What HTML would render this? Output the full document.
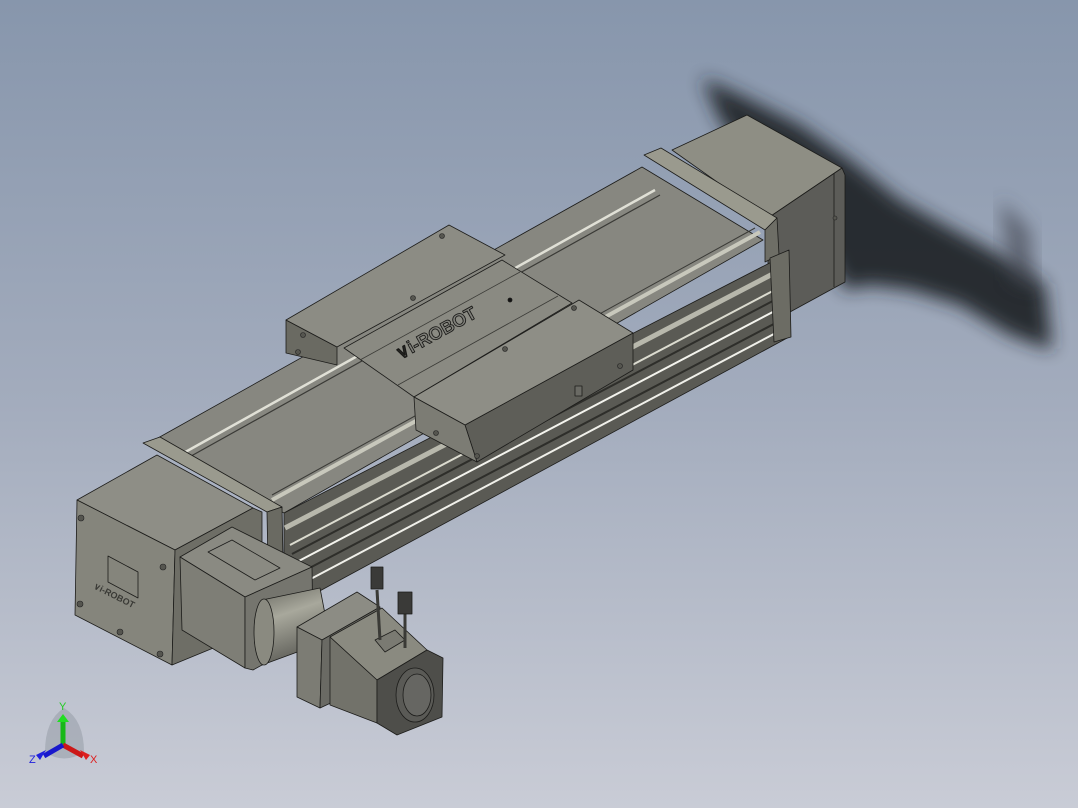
<!DOCTYPE html>
<html><head><meta charset="utf-8"><style>
html,body{margin:0;padding:0;width:1078px;height:808px;overflow:hidden}
svg{display:block}
</style></head><body>
<svg width="1078" height="808" viewBox="0 0 1078 808" xmlns="http://www.w3.org/2000/svg">
<defs>
<linearGradient id="bg" x1="0" y1="0" x2="0" y2="1">
<stop offset="0" stop-color="#8796ac"/><stop offset="0.5" stop-color="#a3acbd"/><stop offset="1" stop-color="#c9ccd6"/>
</linearGradient>
<filter id="blur" x="-20%" y="-20%" width="140%" height="140%"><feGaussianBlur stdDeviation="9"/></filter>
<linearGradient id="cyl" x1="0" y1="0" x2="0.3" y2="1">
<stop offset="0" stop-color="#6c6c64"/><stop offset="0.4" stop-color="#a8a89c"/><stop offset="1" stop-color="#5e5e58"/>
</linearGradient>
</defs>
<rect width="1078" height="808" fill="url(#bg)"/>
<!-- shadow -->
<path d="M702,78 L740,95 L800,125 L850,160 L900,200 L950,228 L1000,255 L1045,285 L1052,350 L1010,335 L960,305 L910,290 L870,285 L845,290 L830,260 L780,200 L720,120 Z" fill="#22252b" filter="url(#blur)" opacity="0.95"/>
<path d="M1000,200 L1030,230 L1035,290 L1010,280 Z" fill="#3a3e46" filter="url(#blur)" opacity="0.6"/>
<g stroke="#1c1c1a" stroke-width="0.8" stroke-linejoin="round">
<!-- right motor block -->
<polygon points="672,150 747,115 842,168 768,218" fill="#8e8e84"/>
<polygon points="768,218 842,168 845,175 845,282 790,312 768,300" fill="#5c5c58"/>
<line x1="834" y1="173" x2="834" y2="287"/>
<!-- right flange -->
<polygon points="644,155 661,148 777,218 765,230" fill="#9a9a8e"/>
<polygon points="765,230 777,218 779,255 765,262" fill="#6e6e66"/>
<!-- rail side face -->
<polygon points="284,513 789,253 789,337 316,593 284,560" fill="#5a5a54"/>
<!-- rail top -->
<polygon points="149,443 642,167 763,240 284,513" fill="#878780"/>
<line x1="180" y1="455" x2="655" y2="190" stroke="#e0e0d6" stroke-width="2.5"/>
<line x1="184" y1="460" x2="660" y2="195" stroke="#3a3a36" stroke-width="1.2"/>
<line x1="272" y1="500" x2="760" y2="232" stroke="#c8c8bc" stroke-width="4"/>
<line x1="272" y1="495" x2="755" y2="228" stroke="#3a3a36" stroke-width="1"/>
<!-- side stripes -->
<line x1="285" y1="528" x2="788" y2="266" stroke="#b8b8ac" stroke-width="5"/>
<line x1="290" y1="545" x2="788" y2="283" stroke="#dcdcd0" stroke-width="2"/>
<line x1="292" y1="554" x2="788" y2="293" stroke="#2e2e2a" stroke-width="2"/>
<line x1="295" y1="563" x2="788" y2="304" stroke="#f4f4ee" stroke-width="2"/>
<line x1="300" y1="573" x2="789" y2="316" stroke="#2e2e2a" stroke-width="2"/>
<line x1="305" y1="582" x2="789" y2="326" stroke="#f0f0ea" stroke-width="2"/>
<polygon points="770,258 789,250 791,337 774,342" fill="#6c6c64"/>
<!-- carriage plate 1 -->
<polygon points="286,320 337,347 337,365 286,353" fill="#6a6a62"/>
<polygon points="286,320 449,225 505,255 337,347" fill="#8c8c84"/>
<!-- center body -->
<polygon points="344,348 502,260 572,303 414,397" fill="#8a8a82"/>
<line x1="360" y1="360" x2="520" y2="272" stroke="#3a3a36"/>
<line x1="398" y1="385" x2="558" y2="296" stroke="#3a3a36"/>
<text x="0" y="0" font-family="Liberation Sans, sans-serif" font-size="18" font-weight="bold" fill="#80807a" stroke="#1a1a18" stroke-width="0.9" transform="translate(400,360) rotate(-29)">∨i-ROBOT</text>
<circle cx="510" cy="300" r="2" fill="#111"/>
<!-- carriage plate 2 -->
<polygon points="465,425 633,333 633,370 477,462" fill="#5e5e58"/>
<polygon points="414,397 579,300 633,333 465,425" fill="#8e8e86"/>
<polygon points="414,397 465,425 477,462 416,430" fill="#7c7c74"/>
<rect x="575" y="386" width="7" height="10" fill="#6a6a64"/>
<!-- left flange -->
<polygon points="143,443 160,437 282,507 267,512" fill="#9a9a8e"/>
<polygon points="267,512 282,507 283,560 268,565" fill="#6a6a62"/>
<!-- left box -->
<polygon points="77,500 157,455 253,508 175,550" fill="#8e8e86"/>
<polygon points="77,500 175,550 172,665 75,615" fill="#85857c"/>
<polygon points="175,550 253,508 262,512 262,628 172,665" fill="#6e6e66"/>
<polygon points="108,556 138,572 138,598 108,582" fill="none"/>
<text x="0" y="0" font-family="Liberation Sans, sans-serif" font-size="9" font-weight="bold" fill="#3a3a36" stroke="none" transform="translate(93,588) rotate(27)">∨i-ROBOT</text>
<!-- gearbox -->
<polygon points="180,557 232,527 312,567 245,597" fill="#8a8a82"/>
<polygon points="180,557 245,597 245,668 182,630" fill="#7e7e76"/>
<polygon points="245,597 312,567 313,637 253,670 245,668" fill="#75756e"/>
<polygon points="208,552 232,540 280,568 255,580" fill="none"/>
<!-- cylinder -->
<path d="M262,600 L320,588 L330,640 L262,665 Z" fill="url(#cyl)"/>
<ellipse cx="264" cy="632" rx="10" ry="33" fill="#8a8a80"/>
<!-- servo flange block -->
<polygon points="297,627 357,592 380,607 322,640" fill="#8c8c84"/>
<polygon points="297,627 322,640 320,708 297,697" fill="#7c7c74"/>
<polygon points="322,640 380,607 380,680 320,708" fill="#6a6a64"/>
<!-- motor body -->
<polygon points="330,637 382,608 427,650 377,680" fill="#8a8a80"/>
<polygon points="330,637 377,680 377,723 330,705" fill="#72726a"/>
<polygon points="377,680 427,650 443,658 442,717 397,735 377,723" fill="#4e4e4a"/>
<ellipse cx="415" cy="695" rx="19" ry="27" fill="#5a5a56"/>
<ellipse cx="417" cy="695" rx="14" ry="21" fill="#666662"/>
<polygon points="375,640 395,630 405,640 385,652" fill="#7a7a72"/>
<!-- cables -->
<line x1="377" y1="590" x2="380" y2="640" stroke="#3a3a36" stroke-width="3"/>
<line x1="405" y1="612" x2="405" y2="648" stroke="#3a3a36" stroke-width="3"/>
<rect x="371" y="567" width="12" height="22" fill="#3a3a38"/>
<rect x="398" y="592" width="14" height="22" fill="#3a3a38"/>
</g>
<!-- screw holes -->
<g fill="#55554f" stroke="#222" stroke-width="0.6">
<circle cx="81" cy="518" r="3"/><circle cx="163" cy="567" r="3"/><circle cx="80" cy="604" r="3"/><circle cx="160" cy="654" r="3"/><circle cx="120" cy="632" r="3"/>
<circle cx="303" cy="335" r="2.5"/><circle cx="442" cy="236" r="2.5"/><circle cx="413" cy="298" r="2.5"/><circle cx="505" cy="349" r="2.5"/><circle cx="574" cy="308" r="2.5"/><circle cx="436" cy="433" r="2.5"/><circle cx="477" cy="456" r="2.5"/><circle cx="620" cy="366" r="2.5"/><circle cx="298" cy="352" r="2.5"/><circle cx="835" cy="218" r="2"/>
</g>
<!-- triad -->
<g>
<path d="M45,752 Q45,720 64,708 Q84,720 84,752 Q64,765 45,752 Z" fill="#9aa0aa" opacity="0.6"/>
<line x1="63" y1="745" x2="63" y2="722" stroke="#18b818" stroke-width="5"/>
<polygon points="57,722 69,722 63,714" fill="#22dd22"/>
<line x1="63" y1="745" x2="83" y2="756" stroke="#cc1818" stroke-width="5"/>
<polygon points="80,750 86,760 90,755" fill="#dd2020"/>
<line x1="63" y1="745" x2="44" y2="756" stroke="#1818cc" stroke-width="5"/>
<polygon points="46,750 40,760 36,755" fill="#2020dd"/>
<text x="59" y="710" font-family="Liberation Sans, sans-serif" font-size="11" fill="#22cc22">Y</text>
<text x="90" y="763" font-family="Liberation Sans, sans-serif" font-size="11" fill="#dd2020">X</text>
<text x="29" y="763" font-family="Liberation Sans, sans-serif" font-size="11" fill="#2020dd">Z</text>
</g>
</svg>
</body></html>
